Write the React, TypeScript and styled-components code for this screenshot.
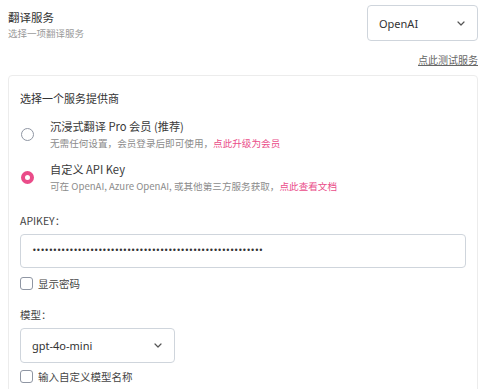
import styled, { createGlobalStyle } from "styled-components";

const GlobalStyle = createGlobalStyle`
    body {
        margin: 0;
        background: #fff;
        font-family: "Noto Sans CJK SC", "Noto Sans", sans-serif;
        color: #333;
    }
`;

const Page = styled.div`
    padding: 5px 22px 0 8px;
`;

const Header = styled.div`
    display: flex;
    justify-content: space-between;
    align-items: flex-start;
`;

const TitleBlock = styled.div`
    padding-top: 4px;
`;

const Title = styled.div`
    font-size: 11.5px;
    line-height: 16px;
    color: #333;
`;

const Subtitle = styled.div`
    font-size: 9.5px;
    line-height: 16px;
    color: #9a9a9a;
`;

const SelectBox = styled.div<{ $width: number; $height: number }>`
    box-sizing: border-box;
    width: ${(p) => p.$width}px;
    height: ${(p) => p.$height}px;
    display: flex;
    align-items: center;
    justify-content: space-between;
    padding: 0 12px 0 11px;
    border: 1px solid #cfd5dc;
    border-radius: 4px;
    font-family: "Noto Sans", sans-serif;
    font-size: 11px;
    color: #333;
    background: #fff;
`;

const LinkRow = styled.div`
    display: flex;
    justify-content: flex-end;
    margin-top: 12px;
    margin-bottom: 8px;
`;

const TestLink = styled.a`
    font-size: 10px;
    line-height: 14px;
    color: #666;
    text-decoration: underline;
`;

const Card = styled.div`
    border: 1px solid #ececec;
    border-radius: 4px;
    padding: 13px 11px 40px 11px;
`;

const CardHeading = styled.div`
    font-size: 11px;
    line-height: 18px;
    color: #333;
`;

const Options = styled.div`
    display: flex;
    flex-direction: column;
    gap: 9px;
    margin-top: 10.5px;
`;

const Option = styled.div`
    display: flex;
    align-items: center;
    padding-left: 1px;
`;

const Radio = styled.span<{ $checked?: boolean }>`
    box-sizing: border-box;
    width: 13px;
    height: 13px;
    border-radius: 50%;
    flex-shrink: 0;
    border: ${(p) => (p.$checked ? "4px solid #ea4c89" : "1.5px solid #8f96a3")};
    background: #fff;
    margin-right: 16px;
`;

const OptionText = styled.div`
    display: flex;
    flex-direction: column;
`;

const OptionTitle = styled.div`
    font-size: 11.2px;
    line-height: 17px;
    color: #3a3a3a;
`;

const OptionDesc = styled.div`
    font-size: 9.6px;
    line-height: 17px;
    color: #8c8c8c;
`;

const Pink = styled.a`
    color: #ea4c89;
    text-decoration: none;
`;

const FieldLabel = styled.div<{ $top: number }>`
    font-size: 10.5px;
    line-height: 16px;
    color: #444;
    margin-top: ${(p) => p.$top}px;
`;

const PasswordInput = styled.input`
    display: block;
    box-sizing: border-box;
    width: 100%;
    height: 34px;
    margin-top: 5px;
    padding: 0 11px;
    border: 1px solid #cfd5dc;
    border-radius: 4px;
    font-size: 8px;
    letter-spacing: -0.6px;
    color: #333;
    font-family: "DejaVu Sans", sans-serif;
    outline: none;
`;

const CheckRow = styled.label<{ $top: number }>`
    display: flex;
    align-items: center;
    gap: 5px;
    margin-top: ${(p) => p.$top}px;
    font-size: 10.5px;
    line-height: 16px;
    color: #444;
`;

const Box = styled.span`
    box-sizing: border-box;
    width: 13px;
    height: 13px;
    border: 1px solid #8f96a3;
    border-radius: 3px;
    background: #fff;
`;

const ModelSelect = styled.div`
    margin-top: 5px;
`;

function Chevron() {
    return (
        <svg width="8" height="5" viewBox="0 0 8 5">
            <path d="M1 1 L4 4 L7 1" fill="none" stroke="#555" strokeWidth="1.2" strokeLinecap="round" strokeLinejoin="round" />
        </svg>
    );
}

export default function App() {
    return (
        <>
            <GlobalStyle />
            <Page>
                <Header>
                    <TitleBlock>
                        <Title>翻译服务</Title>
                        <Subtitle>选择一项翻译服务</Subtitle>
                    </TitleBlock>
                    <SelectBox $width={111} $height={36}>
                        <span>OpenAI</span>
                        <Chevron />
                    </SelectBox>
                </Header>

                <LinkRow>
                    <TestLink>点此测试服务</TestLink>
                </LinkRow>

                <Card>
                    <CardHeading>选择一个服务提供商</CardHeading>
                    <Options>
                        <Option>
                            <Radio />
                            <OptionText>
                                <OptionTitle>沉浸式翻译 Pro 会员 (推荐)</OptionTitle>
                                <OptionDesc>
                                    无需任何设置，会员登录后即可使用，<Pink>点此升级为会员</Pink>
                                </OptionDesc>
                            </OptionText>
                        </Option>
                        <Option>
                            <Radio $checked />
                            <OptionText>
                                <OptionTitle>自定义 API Key</OptionTitle>
                                <OptionDesc>
                                    可在 OpenAI, Azure OpenAI, 或其他第三方服务获取，<Pink>点此查看文档</Pink>
                                </OptionDesc>
                            </OptionText>
                        </Option>
                    </Options>

                    <FieldLabel $top={18}>APIKEY：</FieldLabel>
                    <PasswordInput type="password" readOnly value={"x".repeat(56)} />
                    <CheckRow $top={8}>
                        <Box />
                        显示密码
                    </CheckRow>

                    <FieldLabel $top={15}>模型：</FieldLabel>
                    <ModelSelect>
                        <SelectBox $width={155} $height={35}>
                            <span>gpt-4o-mini</span>
                            <Chevron />
                        </SelectBox>
                    </ModelSelect>
                    <CheckRow $top={6}>
                        <Box />
                        输入自定义模型名称
                    </CheckRow>
                </Card>
            </Page>
        </>
    );
}
